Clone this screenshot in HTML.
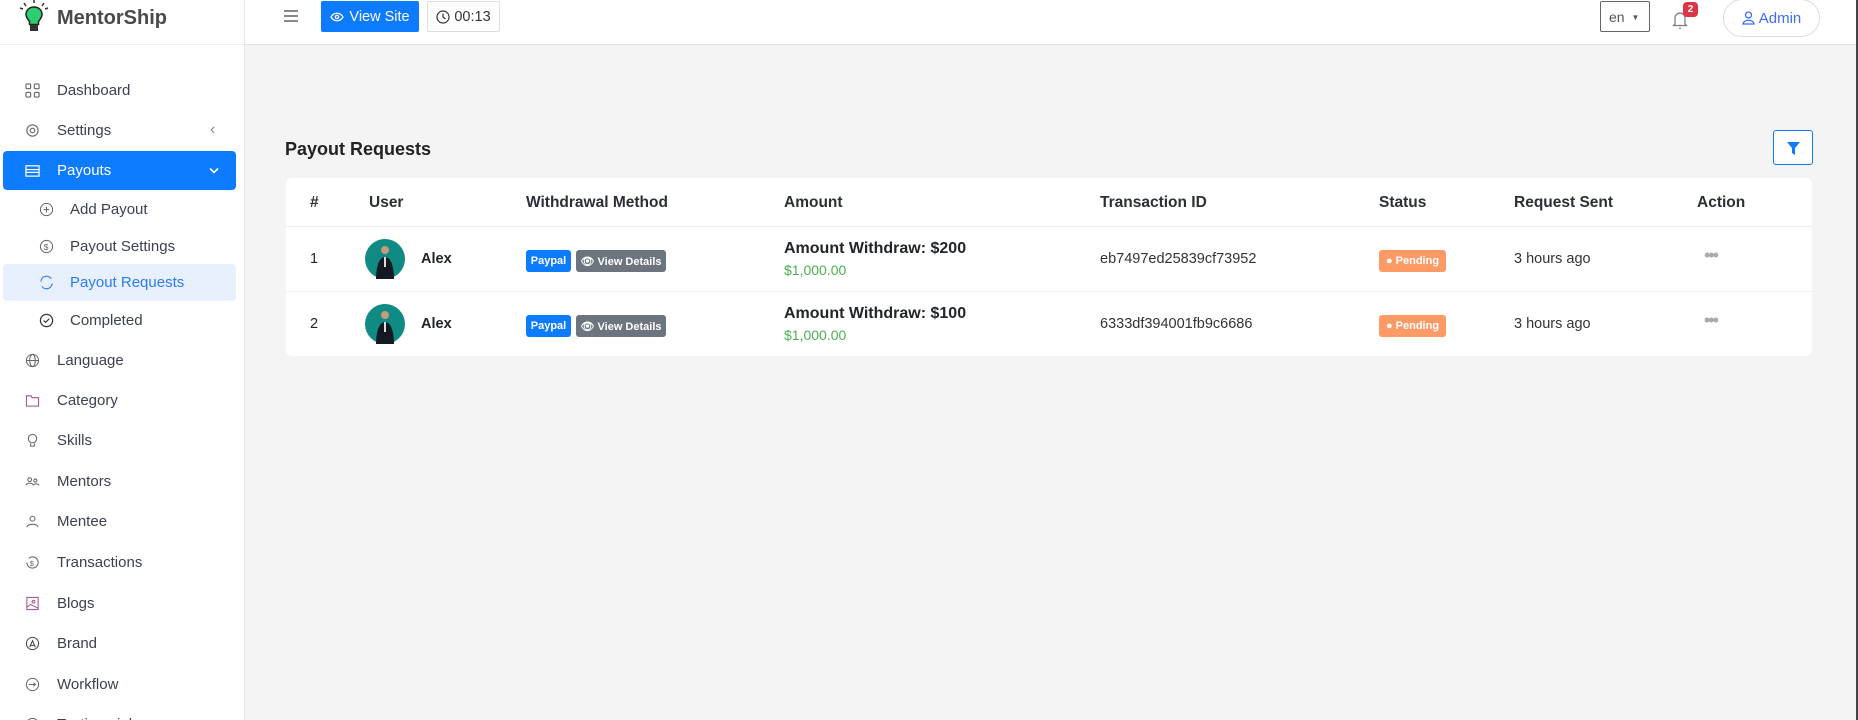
<!DOCTYPE html>
<html style="overflow:hidden;width:1858px;height:720px"><head><meta charset="utf-8"><style>
*{box-sizing:border-box;margin:0;padding:0}
body{width:1858px;height:720px;overflow:hidden;background:#f4f4f4;font-family:"Liberation Sans",sans-serif;position:relative;color:#212529}
.a{position:absolute}
#sb{left:0;top:0;width:245px;height:720px;background:#fff;border-right:1px solid #e6e6e6;overflow:hidden}
#hd{left:245px;top:0;right:0;height:45px;background:#fff;border-bottom:1px solid #e2e2e2}
.logo{left:0;top:0;width:245px;height:45px;border-bottom:1px solid #eee}
.mi{position:absolute;left:0;width:245px;height:40px;font-size:15px;color:#3b4150;display:flex;align-items:center}
.mi svg{position:absolute;left:25px;width:15px;height:15px}
.mi span{position:absolute;left:57px}
.sub svg{left:39px}
.sub span{left:70px}
.th{position:absolute;top:194px;font-size:15.5px;font-weight:bold;color:#2b2f36}
.row{position:absolute;left:286px;width:1526px;height:65px}
.c{position:absolute;font-size:14.5px}
.badge{position:absolute;height:22px;border-radius:3px;color:#fff;font-size:11px;font-weight:bold;display:flex;align-items:center;justify-content:center}
</style></head><body>
<div id="sb" class="a">
 <div class="a logo">
  <svg class="a" style="left:18px;top:0" width="32" height="34" viewBox="0 0 32 34"><g stroke="#333" stroke-width="1.5"><line x1="16" y1="0" x2="16" y2="3"/><line x1="6" y1="3" x2="8" y2="6"/><line x1="26" y1="3" x2="24" y2="6"/><line x1="2" y1="8" x2="5" y2="9"/><line x1="30" y1="8" x2="27" y2="9"/></g><path d="M16 7c-5 0-8 3.5-8 7.5 0 3 2 5 3.5 7v3h9v-3c1.5-2 3.5-4 3.5-7C24 10.5 21 7 16 7z" fill="#2ecc71" stroke="#222" stroke-width="1.5"/><rect x="12" y="25" width="8" height="6" fill="#333"/></svg>
  <div class="a" style="left:57px;top:7px;font-size:20px;font-weight:bold;color:#4a4a4a">MentorShip</div>
 </div>
 <div class="mi" style="top:70px"><svg viewBox="0 0 16 16" fill="none" stroke="#666" stroke-width="1.2"><rect x="1" y="1" width="5" height="5" rx="1"/><rect x="10" y="1" width="5" height="5" rx="1"/><rect x="1" y="10" width="5" height="5" rx="1"/><rect x="10" y="10" width="5" height="5" rx="1"/></svg><span>Dashboard</span></div>
 <div class="mi" style="top:110px"><svg viewBox="0 0 16 16" fill="none" stroke="#666" stroke-width="1.2"><circle cx="8" cy="8" r="2.5"/><circle cx="8" cy="8" r="6"/></svg><span>Settings</span><span style="left:210px;color:#888;font-size:16px">‹</span></div>
 <div class="mi" style="top:151px;left:3px;width:233px;height:39px;background:#0d7bfd;border-radius:4px;color:#fff"><svg style="left:22px" viewBox="0 0 16 16" fill="none" stroke="#fff" stroke-width="1.3"><rect x="1" y="3" width="14" height="11"/><line x1="1" y1="7" x2="15" y2="7"/><line x1="1" y1="10" x2="15" y2="10"/></svg><span style="left:54px">Payouts</span><svg style="left:205px;width:12px" viewBox="0 0 12 12" fill="none" stroke="#fff" stroke-width="1.6"><path d="M2 4l4 4 4-4"/></svg></div>
 <div class="mi sub" style="top:189px"><svg viewBox="0 0 16 16" fill="none" stroke="#666" stroke-width="1.1"><circle cx="8" cy="8" r="6.5"/><path d="M8 5v6M5 8h6"/></svg><span>Add Payout</span></div>
 <div class="mi sub" style="top:226px"><svg viewBox="0 0 16 16" fill="none" stroke="#666" stroke-width="1.1"><circle cx="8" cy="8" r="6.5"/><text x="5" y="11.5" font-size="9" fill="#666" stroke="none">$</text></svg><span>Payout Settings</span></div>
 <div class="mi sub" style="top:264px;left:3px;width:233px;height:37px;background:#e8f0fd;border-radius:4px;color:#2a7df7"><svg style="left:36px" viewBox="0 0 16 16" fill="none" stroke="#2a7df7" stroke-width="1.2"><path d="M2 7a6 6 0 0 1 11-3M14 9a6 6 0 0 1-11 3"/></svg><span style="left:67px">Payout Requests</span></div>
 <div class="mi sub" style="top:300px"><svg viewBox="0 0 16 16" fill="none" stroke="#333" stroke-width="1.3"><circle cx="8" cy="8" r="6.5"/><path d="M5 8l2 2 4-4"/></svg><span>Completed</span></div>
 <div class="mi" style="top:340px"><svg viewBox="0 0 16 16" fill="none" stroke="#666" stroke-width="1.1"><circle cx="8" cy="8" r="6.5"/><ellipse cx="8" cy="8" rx="3" ry="6.5"/><path d="M1.5 8h13"/></svg><span>Language</span></div>
 <div class="mi" style="top:380px"><svg viewBox="0 0 16 16" fill="none" stroke="#a0528a" stroke-width="1.1"><path d="M1.5 3h5l1 2h7v9h-13z"/></svg><span>Category</span></div>
 <div class="mi" style="top:420px"><svg viewBox="0 0 16 16" fill="none" stroke="#666" stroke-width="1.1"><circle cx="8" cy="6" r="4.5"/><path d="M6 11v3h4v-3"/></svg><span>Skills</span></div>
 <div class="mi" style="top:461px"><svg viewBox="0 0 16 16" fill="none" stroke="#666" stroke-width="1.1"><circle cx="5" cy="6" r="2"/><circle cx="11" cy="7" r="1.6"/><path d="M1 12c1-3 7-3 8 0M9 12c1-2 5-2 6 0"/></svg><span>Mentors</span></div>
 <div class="mi" style="top:501px"><svg viewBox="0 0 16 16" fill="none" stroke="#666" stroke-width="1.1"><circle cx="8" cy="5" r="2.6"/><path d="M2 14c1-4 11-4 12 0"/></svg><span>Mentee</span></div>
 <div class="mi" style="top:542px"><svg viewBox="0 0 16 16" fill="none" stroke="#666" stroke-width="1.1"><path d="M2 8a6 6 0 1 0 2-4.5"/><text x="5" y="11.5" font-size="8" fill="#666" stroke="none">$</text></svg><span>Transactions</span></div>
 <div class="mi" style="top:583px"><svg viewBox="0 0 16 16" fill="none" stroke="#a0528a" stroke-width="1.1"><rect x="2" y="1.5" width="12" height="13"/><circle cx="9" cy="6" r="1.5"/><path d="M2 12l4-3 8 4"/></svg><span>Blogs</span></div>
 <div class="mi" style="top:623px"><svg viewBox="0 0 16 16" fill="none" stroke="#444" stroke-width="1.1"><circle cx="8" cy="8" r="6.5"/><path d="M5 12l3-7 3 7M6 10h4"/></svg><span>Brand</span></div>
 <div class="mi" style="top:664px"><svg viewBox="0 0 16 16" fill="none" stroke="#666" stroke-width="1.1"><circle cx="8" cy="8" r="6.5"/><path d="M4 8h7M9 6l2 2-2 2"/></svg><span>Workflow</span></div>
 <div class="mi" style="top:704px"><svg viewBox="0 0 16 16" fill="none" stroke="#666" stroke-width="1.1"><circle cx="8" cy="8" r="6.5"/></svg><span>Testimonials</span></div>
</div>
<div id="hd" class="a"></div>
<svg class="a" style="left:284px;top:10px" width="14" height="12" viewBox="0 0 14 12" stroke="#555" stroke-width="1.4"><line x1="0" y1="1" x2="14" y2="1"/><line x1="0" y1="6" x2="14" y2="6"/><line x1="0" y1="11" x2="14" y2="11"/></svg>
<div class="a" style="left:321px;top:1px;width:98px;height:31px;background:#0d7bfd;border-radius:2px;color:#fff;font-size:14.5px;display:flex;align-items:center;justify-content:center;gap:5px"><svg width="14" height="10" viewBox="0 0 14 10" fill="none" stroke="#fff" stroke-width="1.3"><path d="M1 5c3-5 9-5 12 0c-3 5-9 5-12 0z"/><circle cx="7" cy="5" r="1.6"/></svg>View Site</div>
<div class="a" style="left:427px;top:1px;width:73px;height:31px;border:1px solid #ddd;border-radius:2px;color:#333;font-size:14.5px;display:flex;align-items:center;justify-content:center;gap:4px"><svg width="14" height="14" viewBox="0 0 14 14" fill="none" stroke="#333" stroke-width="1.2"><circle cx="7" cy="7" r="6"/><path d="M7 3.5V7l2.5 2"/></svg>00:13</div>
<div class="a" style="left:1600px;top:1px;width:50px;height:31px;border:1px solid #666;border-radius:2px;font-size:14px;color:#555;padding:7px 0 0 8px">en <span style="font-size:8px;vertical-align:2px;margin-left:3px">▼</span></div>
<svg class="a" style="left:1672px;top:8px" width="16" height="22" viewBox="0 0 16 22" fill="none" stroke="#777" stroke-width="1.2"><path d="M3 16V10a5 5 0 0 1 10 0v6l1.5 1.5h-13z"/><path d="M7 20h2"/></svg>
<div class="a" style="left:1683px;top:2px;width:15px;height:15px;background:#dc3545;border-radius:4px;color:#fff;font-size:10px;font-weight:bold;text-align:center;line-height:15px">2</div>
<div class="a" style="left:1723px;top:-1px;width:97px;height:38px;border:1px solid #ddd;border-radius:19px;color:#3d6ef5;font-size:15px;display:flex;align-items:center;justify-content:center;gap:4px"><svg width="13" height="14" viewBox="0 0 13 14" fill="none" stroke="#3d6ef5" stroke-width="1.3"><circle cx="6.5" cy="4" r="3"/><path d="M1 13c1-5 10-5 11 0z"/></svg>Admin</div>
<div class="a" style="right:0;top:0;width:2px;height:720px;background:#444"></div>

<div class="a" style="left:285px;top:139px;font-size:18px;font-weight:bold;color:#222">Payout Requests</div>
<div class="a" style="left:1773px;top:130px;width:40px;height:35px;border:1px solid #0d7bfd;border-radius:3px;background:#fff"><svg style="position:absolute;left:13px;top:11px" width="13" height="13" viewBox="0 0 13 13"><path d="M0 0h13L8 6v7L5 11V6z" fill="#0d7bfd"/></svg></div>

<div class="a" style="left:286px;top:178px;width:1526px;height:178px;background:#fff;border-radius:6px"></div>
<div class="a" style="left:286px;top:226px;width:1526px;height:1px;background:#ececec"></div>
<div class="a" style="left:286px;top:291px;width:1526px;height:1px;background:#f0f0f0"></div>
<div class="th" style="left:310px">#</div>
<div class="th" style="left:369px">User</div>
<div class="th" style="left:526px">Withdrawal Method</div>
<div class="th" style="left:784px">Amount</div>
<div class="th" style="left:1100px">Transaction ID</div>
<div class="th" style="left:1379px">Status</div>
<div class="th" style="left:1514px">Request Sent</div>
<div class="th" style="left:1697px">Action</div>

<div class="row" style="top:227px">
 <div class="c" style="left:24px;top:24px">1</div>
 <svg class="a" style="left:79px;top:12px" width="40" height="40" viewBox="0 0 40 40"><circle cx="20" cy="20" r="20" fill="#0f8b84"/><circle cx="20" cy="11" r="4" fill="#c79a7d"/><path d="M11 40c0-12 3-22 9-22s9 10 9 22z" fill="#151a22"/><path d="M19 18h2v10h-2z" fill="#ddd"/></svg>
 <div class="c" style="left:135px;top:24px;font-weight:bold">Alex</div>
 <div class="badge" style="left:240px;top:23px;width:45px;background:#0d7bfd">Paypal</div>
 <div class="badge" style="left:290px;top:23px;width:90px;background:#6c757d">👁 View Details</div>
 <div class="c" style="left:498px;top:13px;font-size:16px;font-weight:bold">Amount Withdraw: $200</div>
 <div class="c" style="left:498px;top:35px;font-size:14px;color:#4caf50">$1,000.00</div>
 <div class="c" style="left:814px;top:24px;color:#333">eb7497ed25839cf73952</div>
 <div class="badge" style="left:1093px;top:23px;width:67px;background:#fd9a66">● Pending</div>
 <div class="c" style="left:1228px;top:24px;color:#333">3 hours ago</div>
 <div class="c" style="left:1418px;top:18px;color:#aaa;font-size:18px;letter-spacing:-2px">•••</div>
</div>
<div class="row" style="top:292px">
 <div class="c" style="left:24px;top:24px">2</div>
 <svg class="a" style="left:79px;top:12px" width="40" height="40" viewBox="0 0 40 40"><circle cx="20" cy="20" r="20" fill="#0f8b84"/><circle cx="20" cy="11" r="4" fill="#c79a7d"/><path d="M11 40c0-12 3-22 9-22s9 10 9 22z" fill="#151a22"/><path d="M19 18h2v10h-2z" fill="#ddd"/></svg>
 <div class="c" style="left:135px;top:24px;font-weight:bold">Alex</div>
 <div class="badge" style="left:240px;top:23px;width:45px;background:#0d7bfd">Paypal</div>
 <div class="badge" style="left:290px;top:23px;width:90px;background:#6c757d">👁 View Details</div>
 <div class="c" style="left:498px;top:13px;font-size:16px;font-weight:bold">Amount Withdraw: $100</div>
 <div class="c" style="left:498px;top:35px;font-size:14px;color:#4caf50">$1,000.00</div>
 <div class="c" style="left:814px;top:24px;color:#333">6333df394001fb9c6686</div>
 <div class="badge" style="left:1093px;top:23px;width:67px;background:#fd9a66">● Pending</div>
 <div class="c" style="left:1228px;top:24px;color:#333">3 hours ago</div>
 <div class="c" style="left:1418px;top:18px;color:#aaa;font-size:18px;letter-spacing:-2px">•••</div>
</div>
</body></html>
